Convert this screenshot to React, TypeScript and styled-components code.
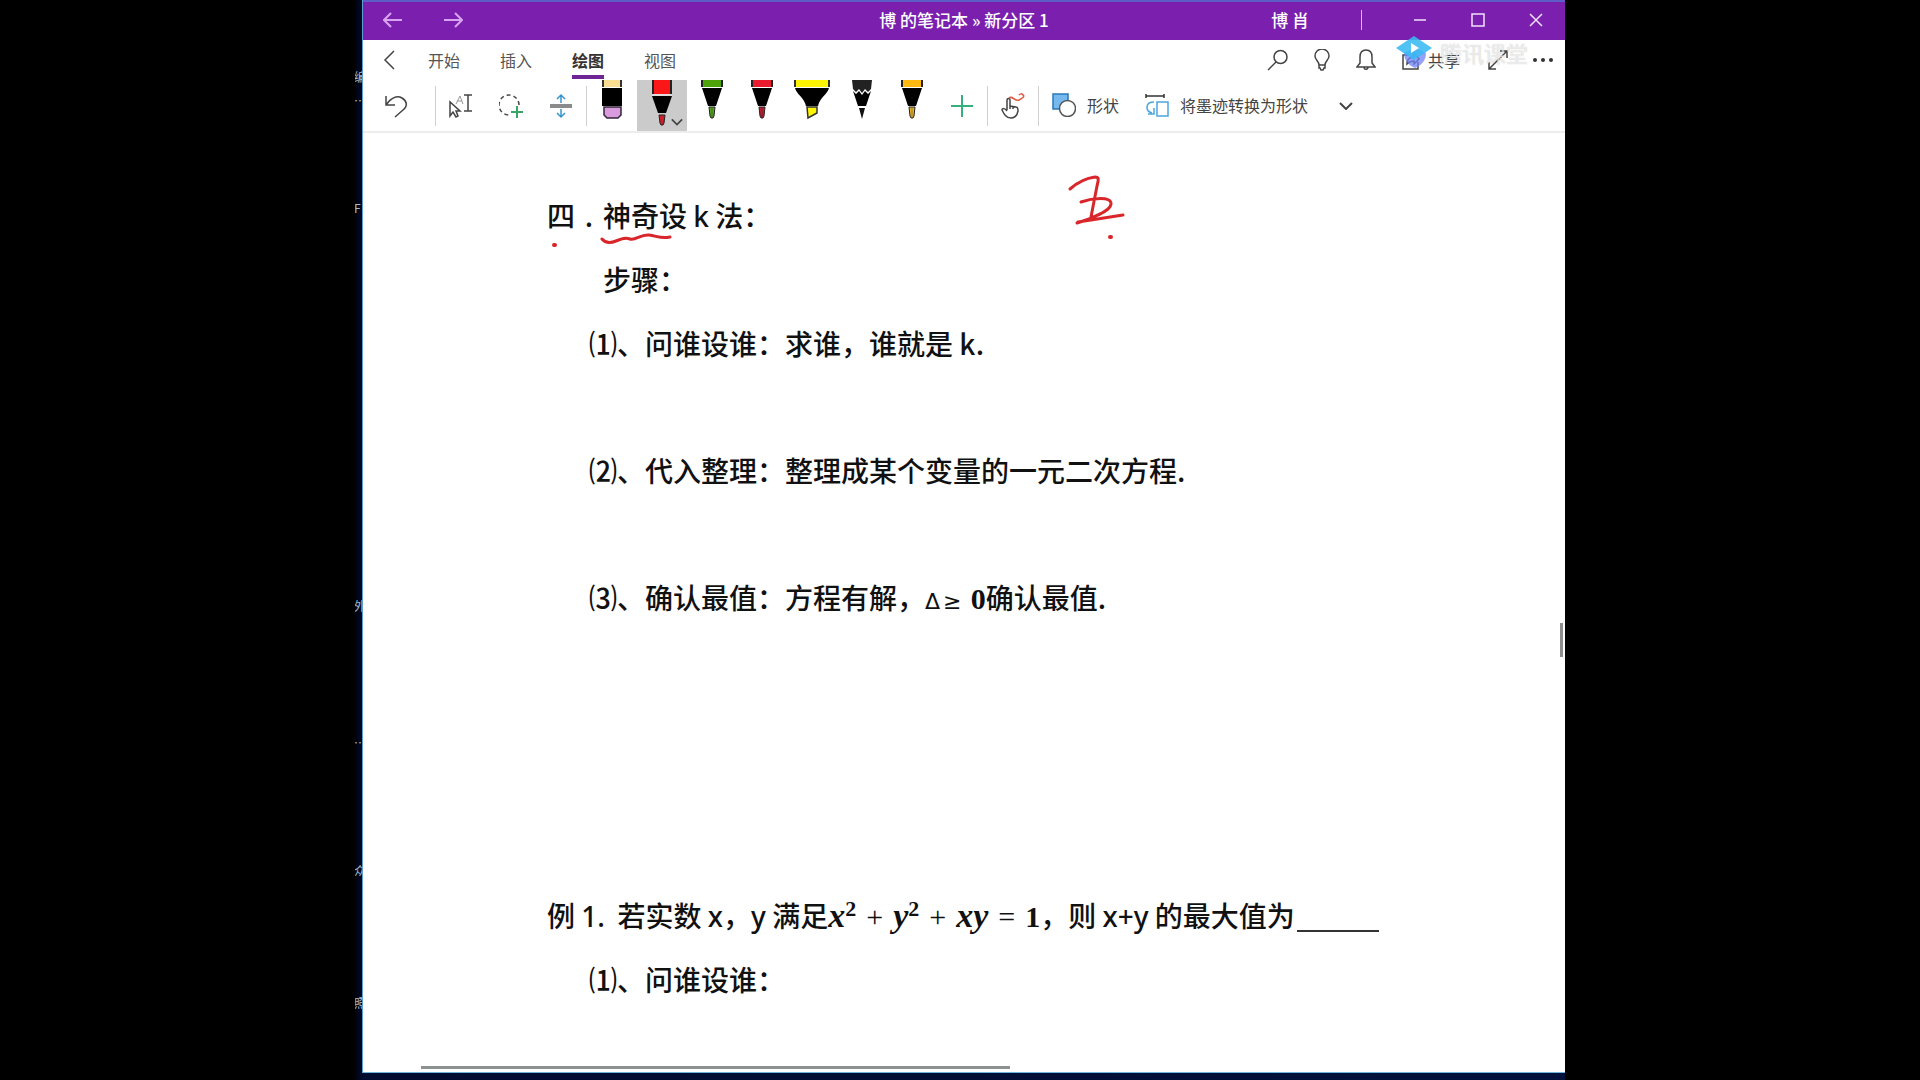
import React from "react";
import styled, { createGlobalStyle } from "styled-components";

const GlobalStyle = createGlobalStyle`
  * { box-sizing: border-box; }
  body {
    margin: 0;
    background: #000;
    font-family: "Noto Sans CJK SC", "Noto Sans", sans-serif;
  }
  svg { display: block; flex: none; }
`;

const Screen = styled.div`
  display: flex;
  min-height: 100vh;
  padding: 0 355px;
`;

const Desktop = styled.div`
  position: relative;
  display: flex;
  flex: 1;
  min-width: 0;
  padding: 0 0 7px 8px;
  overflow: hidden;
  background: linear-gradient(90deg, #00020c 0, #000b30 8px, #00123c 100%);
`;

const DesktopLabel = styled.span<{ $top: number }>`
  position: absolute;
  left: -1px;
  top: ${(p) => p.$top}px;
  color: #a9bccb;
  font-size: 12px;
  line-height: 16px;
  white-space: nowrap;
`;

const AppWindow = styled.main`
  position: relative;
  display: flex;
  flex: 1;
  flex-direction: column;
  min-width: 0;
  background: #fff;
  border-bottom: 1px solid #6fb4dc;
  box-shadow: -1px 0 0 #5aa0d0;
`;

const TitleBar = styled.header`
  display: grid;
  grid-template-columns: 1fr auto 1fr;
  align-items: center;
  height: 40px;
  padding-bottom: 2px;
  border-top: 2px solid #5e5cc6;
  background: #7b1fae;
  color: #fff;
`;

const Group = styled.div<{ $end?: boolean; $gap?: number }>`
  display: flex;
  align-items: center;
  align-self: stretch;
  gap: ${(p) => p.$gap ?? 0}px;
  justify-content: ${(p) => (p.$end ? "flex-end" : "flex-start")};
`;

const Title = styled.h1`
  margin: 0;
  font-size: 17px;
  font-weight: 500;
  line-height: 24px;
  white-space: nowrap;
`;

const UserName = styled.span`
  margin-right: 52px;
  font-size: 17px;
  font-weight: 500;
  line-height: 24px;
`;

const TitleDivider = styled.span`
  width: 1px;
  height: 20px;
  margin-right: 29px;
  background: #dcb8f0;
`;

const IconButton = styled.button<{ $width: number }>`
  display: flex;
  flex: none;
  align-items: center;
  justify-content: center;
  align-self: stretch;
  width: ${(p) => p.$width}px;
  padding: 0;
  border: 0;
  background: transparent;
  color: inherit;
`;

const TabRow = styled.nav`
  display: flex;
  align-items: center;
  justify-content: space-between;
  height: 40px;
  color: #444;
`;

const Tab = styled.button<{ $active?: boolean }>`
  position: relative;
  align-self: stretch;
  width: 58px;
  padding: 0;
  border: 0;
  background: transparent;
  color: ${(p) => (p.$active ? "#333" : "#555")};
  font-family: inherit;
  font-size: 16px;
  font-weight: ${(p) => (p.$active ? 700 : 400)};

  &::after {
    content: "";
    position: absolute;
    left: 13px;
    right: 13px;
    bottom: 1px;
    height: 4px;
    background: ${(p) => (p.$active ? "#6f2596" : "transparent")};
  }
`;

const ShareButton = styled.button`
  position: relative;
  display: flex;
  align-items: center;
  align-self: stretch;
  gap: 8px;
  width: 87px;
  padding: 0 0 0 14px;
  border: 0;
  background: transparent;
  color: #444;
  font-family: inherit;
  font-size: 16px;
  white-space: nowrap;
`;

const Watermark = styled.div`
  position: absolute;
  z-index: 1;
  top: 36px;
  right: 37px;
  display: flex;
  align-items: flex-start;
  gap: 8px;
  color: rgba(255, 255, 255, 0.7);
  font-size: 22px;
  line-height: 32px;
  text-shadow: 0 0 1px rgba(120, 120, 120, 0.5);
  pointer-events: none;
`;

const Ribbon = styled.div`
  display: flex;
  align-items: center;
  height: 53px;
  border-bottom: 2px solid #ededed;
  color: #444;
`;

const Divider = styled.span<{ $lead?: boolean }>`
  flex: none;
  width: 1px;
  height: 40px;
  margin-left: ${(p) => (p.$lead ? 6 : 0)}px;
  background: #d0d0d0;
`;

const PenButton = styled.button<{ $selected?: boolean }>`
  position: relative;
  display: flex;
  align-items: flex-start;
  align-self: stretch;
  justify-content: center;
  width: 50px;
  padding: 0;
  border: 0;
  background: ${(p) => (p.$selected ? "#cbcbcb" : "transparent")};
`;

const PenChevron = styled.span`
  position: absolute;
  right: 4px;
  bottom: 5px;
`;

const LabelButton = styled.button`
  display: flex;
  align-items: center;
  align-self: stretch;
  gap: 11px;
  padding: 0 13px 2px;
  border: 0;
  background: transparent;
  color: #444;
  font-family: inherit;
  font-size: 16px;
  white-space: nowrap;
`;

const Page = styled.article`
  position: relative;
  flex: 1;
  padding: 50px 0 0 184px;
  color: #111;
  font-family: "Noto Sans CJK SC", "Noto Sans", sans-serif;
  font-size: 28px;
  font-weight: 500;
`;

const Line = styled.p<{ $indent?: number; $before?: number }>`
  margin: ${(p) => p.$before ?? 0}px 0 0 ${(p) => p.$indent ?? 0}px;
  line-height: 64px;
  white-space: nowrap;
`;

const Latin = styled.span`
  font-family: "Noto Sans", sans-serif;
  line-height: 0;
`;

const CenteredDot = styled.span`
  display: inline-block;
  width: 28px;
  text-align: center;
`;

const Thin = styled.span`
  font-family: "DejaVu Sans", "Noto Sans", sans-serif;
  font-size: 22px;
  font-weight: 400;
  line-height: 0;
`;

const MathText = styled.span`
  font-family: "Liberation Serif", serif;
  font-size: 30px;
  font-weight: 700;
  line-height: 0;

  i { font-size: 34px; }
  sup { font-size: 22px; }
`;

const Operator = styled.span<{ $gap?: number }>`
  margin: 0 ${(p) => p.$gap ?? 10}px;
  font-weight: 400;
`;

const Blank = styled.span`
  display: inline-block;
  width: 82px;
  height: 2px;
  margin-left: 2px;
  vertical-align: -5px;
  background: #333;
`;

const Ink = styled.svg<{ $left: number; $top: number }>`
  position: absolute;
  left: ${(p) => p.$left}px;
  top: ${(p) => p.$top}px;
  fill: none;
  stroke: #d9262b;
  stroke-linecap: round;
  stroke-linejoin: round;
`;

const VerticalThumb = styled.span`
  position: absolute;
  top: 490px;
  right: 2px;
  width: 3px;
  height: 34px;
  background: #8c8f8e;
`;

const HorizontalThumb = styled.span`
  position: absolute;
  left: 58px;
  bottom: 3px;
  width: 49%;
  height: 3px;
  background: #8c9290;
`;

type PenProps = { cap: string; tip: string };

const Pen = ({ cap, tip }: PenProps) => (
  <svg width="22" height="40" viewBox="0 0 22 40">
    <path d="M0 0h22v7H0z" fill="#222" />
    <path d="M2 0h18v7H2z" fill={cap} />
    <path d="M1 8h20l-6 18H7z" fill="#000" />
    <path d="M8 27h6l-1 9-1 2h-2l-1-2z" fill={tip} stroke="#222" strokeWidth="1" />
    <path d="M11 28v9" stroke="#222" strokeOpacity=".35" />
  </svg>
);

const SelectedPen = () => (
  <svg width="22" height="46" viewBox="0 0 22 46">
    <path d="M1 0h20v14H1z" fill="#222" />
    <path d="M3 0h16v14H3z" fill="#fb1717" />
    <path d="M1 16h20l-6 17H7z" fill="#000" />
    <path d="M1 15h20" stroke="#eee" />
    <path d="M8 35h6l-1 8-1 2h-2l-1-2z" fill="#c92127" stroke="#222" />
  </svg>
);

const Eraser = () => (
  <svg width="22" height="40" viewBox="0 0 22 40">
    <path d="M1 0h20v7H1z" fill="#333" />
    <path d="M3 0h16v7H3z" fill="#f9dd91" />
    <path d="M1 8h20v18H1z" fill="#000" />
    <path d="M3 27h17v8l-3 3H6l-3-3z" fill="#d99ade" stroke="#33263a" strokeWidth="1.5" />
  </svg>
);

const Highlighter = () => (
  <svg width="36" height="40" viewBox="0 0 36 40">
    <path d="M0 0h36v7H0z" fill="#333" />
    <path d="M2 0h32v7H2z" fill="#fff500" />
    <path d="M1 8h34c-2 7-9 9-11 18H12C10 17 3 15 1 8z" fill="#000" />
    <path d="M13 27h10v6l-9 5z" fill="#fff500" stroke="#333" strokeWidth="1.5" />
  </svg>
);

const Pencil = () => (
  <svg width="22" height="40" viewBox="0 0 22 40">
    <path d="M1 0h20l-1 9-3 3-3-3-3 4-3-4-3 3-3-3z" fill="#222" />
    <path d="M2 11l3 3 3-3 3 4 3-4 3 3 3-3-5 15H7z" fill="#000" />
    <path d="M8 28h6l-3 11z" fill="#111" />
  </svg>
);

const Chevron = ({ width = 14 }: { width?: number }) => (
  <svg width={width} height="8" viewBox="0 0 14 8" fill="none" stroke="#444" strokeWidth="2">
    <path d="M1 1l6 6 6-6" />
  </svg>
);

const stroke = { fill: "none", stroke: "currentColor", strokeWidth: 1.5 } as const;

const desktopLabels = [
  { text: "编", top: 69 },
  { text: "…", top: 93 },
  { text: "F", top: 200 },
  { text: "外", top: 598 },
  { text: "…", top: 735 },
  { text: "众", top: 863 },
  { text: "照", top: 995 },
];

const tabs = ["开始", "插入", "绘图", "视图"];

const pens = [
  { name: "橡皮擦", art: <Eraser /> },
  { name: "红色粗笔", art: <SelectedPen />, selected: true },
  { name: "绿色笔", art: <Pen cap="#4fa30a" tip="#55a01f" /> },
  { name: "红色笔", art: <Pen cap="#e81c2e" tip="#b91f31" /> },
  { name: "荧光笔", art: <Highlighter /> },
  { name: "铅笔", art: <Pencil /> },
  { name: "黄色笔", art: <Pen cap="#ffb90f" tip="#e0b02c" /> },
];

export default function App() {
  return (
    <>
      <GlobalStyle />
      <Screen>
        <Desktop>
          {desktopLabels.map((label) => (
            <DesktopLabel key={label.top} $top={label.top}>{label.text}</DesktopLabel>
          ))}
          <AppWindow>
            <TitleBar>
              <Group>
                <IconButton $width={60} aria-label="后退">
                  <svg width="20" height="16" viewBox="0 0 20 16" fill="none" stroke="#d8a4f2" strokeWidth="2">
                    <path d="M19 8H2M8 1L1 8l7 7" />
                  </svg>
                </IconButton>
                <IconButton $width={60} aria-label="前进">
                  <svg width="20" height="16" viewBox="0 0 20 16" fill="none" stroke="#d8a4f2" strokeWidth="2">
                    <path d="M1 8h17M12 1l7 7-7 7" />
                  </svg>
                </IconButton>
              </Group>
              <Title>博 的笔记本 » 新分区 1</Title>
              <Group $end>
                <UserName>博 肖</UserName>
                <TitleDivider />
                <IconButton $width={58} aria-label="最小化">
                  <svg width="14" height="14" viewBox="0 0 14 14" fill="none" stroke="#f3e0fb" strokeWidth="1.5">
                    <path d="M1 7h12" />
                  </svg>
                </IconButton>
                <IconButton $width={58} aria-label="最大化">
                  <svg width="14" height="14" viewBox="0 0 14 14" fill="none" stroke="#f3e0fb" strokeWidth="1.5">
                    <path d="M1 1h12v12H1z" />
                  </svg>
                </IconButton>
                <IconButton $width={58} aria-label="关闭">
                  <svg width="14" height="14" viewBox="0 0 14 14" fill="none" stroke="#f3e0fb" strokeWidth="1.5">
                    <path d="M1 1l12 12M13 1L1 13" />
                  </svg>
                </IconButton>
              </Group>
            </TitleBar>

            <TabRow>
              <Group>
                <IconButton $width={52} aria-label="返回">
                  <svg width="12" height="20" viewBox="0 0 12 20" {...stroke}>
                    <path d="M11 1l-9 9 9 9" />
                  </svg>
                </IconButton>
                <Group $gap={14}>
                  {tabs.map((tab) => (
                    <Tab key={tab} $active={tab === "绘图"}>{tab}</Tab>
                  ))}
                </Group>
              </Group>
              <Group $end>
                <IconButton $width={44} aria-label="搜索">
                  <svg width="22" height="22" viewBox="0 0 22 22" {...stroke}>
                    <circle cx="13.500" cy="8" r="6.500" />
                    <path d="M9 13l-8 8" />
                  </svg>
                </IconButton>
                <IconButton $width={44} aria-label="提示">
                  <svg width="18" height="22" viewBox="0 0 18 22" {...stroke}>
                    <path d="M6 16c0-4-4-5-4-9a7 7 0 0 1 14 0c0 4-4 5-4 9zM6 16v3h1l1 2h2l1-2h1v-3" />
                  </svg>
                </IconButton>
                <IconButton $width={44} aria-label="通知">
                  <svg width="20" height="22" viewBox="0 0 20 22" {...stroke}>
                    <path d="M1 18h18l-3-4V8c0-4-2-7-6-7S4 4 4 8v6zM8 18c0 3 4 3 4 0" />
                  </svg>
                </IconButton>
                <ShareButton>
                  <svg width="18" height="20" viewBox="0 0 18 20" {...stroke}>
                    <path d="M7 5H1v14h15v-7M5 14c0-5 3-7 7-7V3l5 6-5 5v-3c-3 0-5 1-7 3z" />
                  </svg>
                  共享
                </ShareButton>
                <IconButton $width={46} aria-label="全屏">
                  <svg width="20" height="20" viewBox="0 0 20 20" {...stroke}>
                    <path d="M1 19L19 1M12 1h7v7M1 12v7h7" />
                  </svg>
                </IconButton>
                <IconButton $width={44} aria-label="更多">
                  <svg width="20" height="4" viewBox="0 0 20 4" fill="#333">
                    <circle cx="2" cy="2" r="2" />
                    <circle cx="10" cy="2" r="2" />
                    <circle cx="18" cy="2" r="2" />
                  </svg>
                </IconButton>
              </Group>
            </TabRow>

            <Watermark>
              <svg width="36" height="32" viewBox="0 0 36 32">
                <path d="M8 17l11-5 11 5c0 7-4 12-11 15C12 29 8 24 8 17z" fill="#6f83f5" opacity=".75" />
                <path d="M18 0l18 12-18 12L0 12z" fill="#39b9f3" opacity=".88" />
                <path d="M15 7l8 5-8 5z" fill="#fff" />
              </svg>
              <span>腾讯课堂</span>
            </Watermark>

            <Ribbon>
              <IconButton $width={66} aria-label="撤消">
                <svg width="24" height="24" viewBox="0 0 24 24" {...stroke}>
                  <path d="M2 2v9h9M2 11C7 4 13 1 18 4s6 8 1 12l-8 7" />
                </svg>
              </IconButton>
              <Divider $lead />
              <IconButton $width={50} aria-label="选择文本">
                <svg width="24" height="24" viewBox="0 0 24 24" {...stroke}>
                  <path d="M1 8v14l3-4 3 5 2-1-2-5h4z" />
                  <path d="M7 10l4-8 3 8M8 7h5" stroke="#999" strokeWidth="1" />
                  <path d="M15 1h8M15 17h8M19 1v16" />
                </svg>
              </IconButton>
              <IconButton $width={50} aria-label="套索选择">
                <svg width="24" height="24" viewBox="0 0 24 24" {...stroke}>
                  <path d="M20 11A10 10 0 1 0 10 21" strokeDasharray="4 3" />
                  <path d="M18 12v12M12 18h12" stroke="#35a867" strokeWidth="2" />
                </svg>
              </IconButton>
              <IconButton $width={50} aria-label="插入空间">
                <svg width="22" height="26" viewBox="0 0 22 26" fill="none" stroke="#3795d0" strokeWidth="1.5">
                  <path d="M11 10V2M7 6l4-4 4 4M11 16v8M7 20l4 4 4-4" />
                  <path d="M0 13h22" stroke="#8b8b8b" strokeWidth="4" />
                </svg>
              </IconButton>
              <Divider />
              {pens.map((pen) => (
                <PenButton key={pen.name} aria-label={pen.name} $selected={pen.selected}>
                  {pen.art}
                  {pen.selected && <PenChevron><Chevron width={12} /></PenChevron>}
                </PenButton>
              ))}
              <IconButton $width={50} aria-label="添加笔">
                <svg width="22" height="22" viewBox="0 0 22 22" fill="none" stroke="#35b07c" strokeWidth="2">
                  <path d="M11 0v22M0 11h22" />
                </svg>
              </IconButton>
              <Divider />
              <IconButton $width={50} aria-label="触摸绘图">
                <svg width="24" height="26" viewBox="0 0 24 26" {...stroke}>
                  <path d="M6 17V7c0-2 3-2 3 0v6l6 1c2 0 2 2 2 4-1 5-3 7-7 7-5 0-7-4-9-8 0-2 3-2 5 1M9 13v3M12 14v2" />
                  <path d="M8 5c4-3 5 4 10 2 4-2 6-4 4-5-1-2-3-1-4 0" stroke="#e2543c" />
                </svg>
              </IconButton>
              <Divider />
              <LabelButton>
                <svg width="24" height="24" viewBox="0 0 24 24">
                  <path d="M1 1h15v15H1z" fill="#75b9ee" stroke="#2878b8" strokeWidth="1.5" />
                  <circle cx="15.500" cy="15.500" r="8" fill="#fff" stroke="#555" strokeWidth="1.5" />
                </svg>
                形状
              </LabelButton>
              <LabelButton>
                <svg width="24" height="24" viewBox="0 0 24 24" fill="none" stroke="#4aa7e0" strokeWidth="1.5">
                  <path d="M12 9h11v14H12zM9 9c-9 0-9 9-2 11M3 21h6v-6" />
                  <path d="M1 3h18M1 1v4M19 1v4" stroke="#333" />
                </svg>
                将墨迹转换为形状
              </LabelButton>
              <IconButton $width={50} aria-label="更多选项">
                <Chevron />
              </IconButton>
            </Ribbon>

            <Page>
              <Line>四<CenteredDot>.</CenteredDot>神奇设 <Latin>k</Latin> 法：</Line>
              <Line $indent={56}>步骤：</Line>
              <Line $indent={42}>⑴、问谁设谁：求谁，谁就是 k.</Line>
              <Line $indent={42} $before={63}>⑵、代入整理：整理成某个变量的一元二次方程.</Line>
              <Line $indent={42} $before={63}>
                ⑶、确认最值：方程有解，<Thin>Δ<Operator $gap={3}>≥</Operator></Thin> <MathText>0</MathText>确认最值.
              </Line>
              <Line $before={254}>
                例 <Latin>1.</Latin>&nbsp; 若实数 <Latin>x</Latin>，<Latin>y</Latin> 满足
                <MathText>
                  <i>x</i><sup>2</sup><Operator>+</Operator><i>y</i><sup>2</sup><Operator>+</Operator><i>xy</i><Operator>=</Operator>1
                </MathText>
                ，则 <Latin>x+y</Latin> 的最大值为<Blank />
              </Line>
              <Line $indent={42}>⑴、问谁设谁：</Line>

              <Ink $left={237} $top={100} width="74" height="20" viewBox="0 0 74 20" strokeWidth="3">
                <path d="M2 6c4 5 9 4 14 2s9-4 14-2 11-5 19-4 12 4 21 2" />
              </Ink>
              <Ink $left={188} $top={108} width="8" height="8" viewBox="0 0 8 8" strokeWidth="4">
                <path d="M3 4h1" />
              </Ink>
              <Ink $left={704} $top={40} width="60" height="70" viewBox="0 0 60 70" strokeWidth="3">
                <path d="M3 16C11 9 20 5 28 4c5 0 3 4 2 9l-6 31M14 29c11-4 31-6 30 2-1 6-10 10-20 14" />
                <path d="M11 49l45-7M10 50l18-6" />
                <path d="M43 64h1" strokeWidth="4" />
              </Ink>
              <VerticalThumb />
              <HorizontalThumb />
            </Page>
          </AppWindow>
        </Desktop>
      </Screen>
    </>
  );
}
